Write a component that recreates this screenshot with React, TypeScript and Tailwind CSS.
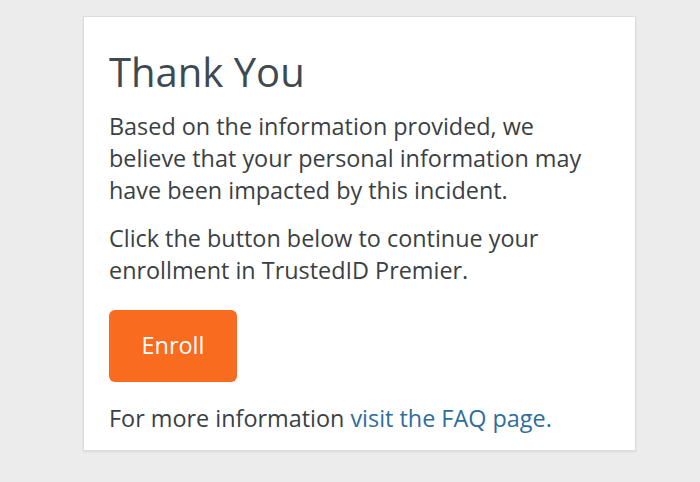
export default function App() {
  return (
    <div
      className="w-[700px] h-[482px] bg-[#ececec] pt-[16px] pl-[83px]"
      style={{ fontFamily: '"Open Sans", sans-serif' }}
    >
      <div className="w-[553px] h-[435px] bg-white border border-[#dcdcdc] shadow-[0_1px_2px_rgba(0,0,0,0.08)] px-[25px] pt-[29px]">
        <h1 className="text-[40px] leading-[52px] text-[#3e4a52] font-normal">Thank You</h1>
        <div className="max-w-[482px]">
          <p className="mt-[12px] text-[23.4px] leading-[32px] text-[#3a3f44]">
            Based on the information provided, we believe that your personal information may have been impacted by this incident.
          </p>
          <p className="mt-[16px] text-[23.4px] leading-[32px] text-[#3a3f44]">
            Click the button below to continue your enrollment in TrustedID Premier.
          </p>
        </div>
        <button className="mt-[24px] w-[128px] h-[72px] rounded-[6px] bg-[#f96b1e] text-white text-[23.4px] block">
          Enroll
        </button>
        <p className="mt-[20px] text-[23.4px] leading-[32px] text-[#3a3f44]">
          For more information <a className="text-[#2f6d9c]">visit the FAQ page.</a>
        </p>
      </div>
    </div>
  );
}
